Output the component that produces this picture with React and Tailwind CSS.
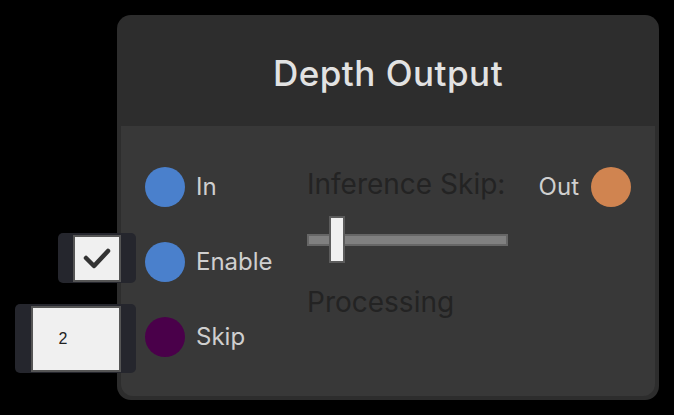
export default function App() {
  return (
    <div className="w-[674px] h-[415px] bg-black pt-[15px] pl-[117px] font-['Inter',sans-serif]">
      <div className="w-[542px] h-[385px] bg-[#2d2d2d] rounded-[14px] flex flex-col">
        {/* Header */}
        <div className="h-[111px] flex items-center justify-center pt-[6px]">
          <span className="text-[35px] font-medium tracking-[0.5px] text-[#e2e2e2]">Depth Output</span>
        </div>

        {/* Body */}
        <div className="flex-1 mx-[4px] mb-[4px] bg-[#383838] rounded-b-[12px] flex pt-[41px] px-[24px]">
          {/* Inputs */}
          <div className="flex flex-col gap-[35px] w-[162px]">
            <div className="flex items-center h-[40px]">
              <div className="w-[40px] h-[40px] rounded-full bg-[#4a80cc]" />
              <span className="ml-[11px] text-[24px] text-[#cfcfcf]">In</span>
            </div>
            <div className="relative flex items-center h-[40px]">
              <div className="absolute left-[-87px] top-[-9px] w-[78px] h-[50px] bg-[#25262d] rounded-[5px] flex items-center justify-center">
                <div className="w-[48px] h-[47px] bg-[#f0f0f0] border-2 border-[#555] flex items-center justify-center">
                  <svg width="30" height="24" viewBox="0 0 30 24">
                    <polyline points="4,12 12,20 26,5" fill="none" stroke="#333" strokeWidth="4.5" strokeLinecap="round" strokeLinejoin="round" />
                  </svg>
                </div>
              </div>
              <div className="w-[40px] h-[40px] rounded-full bg-[#4a80cc]" />
              <span className="ml-[11px] text-[24px] text-[#cfcfcf]">Enable</span>
            </div>
            <div className="relative flex items-center h-[40px]">
              <div className="absolute left-[-130px] top-[-13px] w-[121px] h-[69px] bg-[#25262d] rounded-[5px] flex items-center justify-center">
                <div className="w-[90px] h-[66px] bg-[#f0f0f0] border-2 border-[#555] flex items-center pl-[26px] font-['Liberation_Sans',sans-serif] text-[16px] text-[#222]">
                  2
                </div>
              </div>
              <div className="w-[40px] h-[40px] rounded-full bg-[#4a004a]" />
              <span className="ml-[11px] text-[24px] text-[#cfcfcf]">Skip</span>
            </div>
          </div>

          {/* Middle */}
          <div className="flex flex-col w-[210px] mt-[2px]">
            <span className="text-[28px] leading-[30px] text-[#232323]">Inference Skip:</span>
            <div className="relative mt-[17px] h-[47px] flex items-center">
              <div className="w-[201px] h-[12px] bg-[#808080] border-2 border-[#666]" />
              <div className="absolute left-[22px] top-0 w-[16px] h-[47px] bg-[#f0f0f0] border-2 border-[#5c5c5c]" />
            </div>
            <span className="mt-[24px] text-[28px] leading-[30px] text-[#232323]">Processing</span>
          </div>

          {/* Outputs */}
          <div className="flex-1 flex flex-col items-end">
            <div className="flex items-center h-[40px]">
              <span className="mr-[12px] text-[24px] text-[#cfcfcf]">Out</span>
              <div className="w-[40px] h-[40px] rounded-full bg-[#d08450]" />
            </div>
          </div>
        </div>
      </div>
    </div>
  );
}
